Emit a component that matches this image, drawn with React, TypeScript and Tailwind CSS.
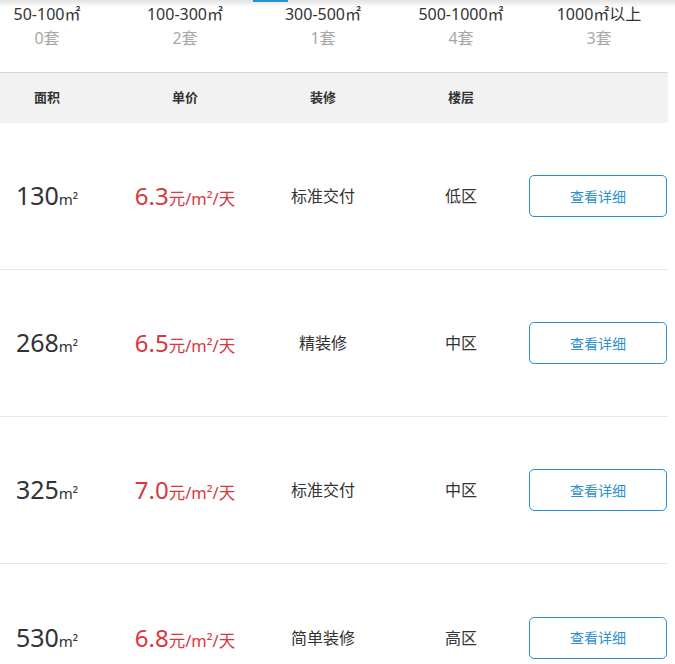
import React from "react";

const tabs = [
  { label: "50-100㎡", count: "0套" },
  { label: "100-300㎡", count: "2套" },
  { label: "300-500㎡", count: "1套" },
  { label: "500-1000㎡", count: "4套" },
  { label: "1000㎡以上", count: "3套" },
];

const rows = [
  { area: "130", price: "6.3", deco: "标准交付", floor: "低区" },
  { area: "268", price: "6.5", deco: "精装修", floor: "中区" },
  { area: "325", price: "7.0", deco: "标准交付", floor: "中区" },
  { area: "530", price: "6.8", deco: "简单装修", floor: "高区" },
];

const grid = "grid grid-cols-[116px_138px_138px_138px_138px] w-[668px]";

export default function App() {
  return (
    <div
      className="relative w-[675px] h-[664px] overflow-hidden bg-white"
      style={{ fontFamily: '"Noto Sans", "Noto Sans CJK SC", sans-serif' }}
    >
      <div className="absolute left-0 top-0 w-full h-[7px] bg-gradient-to-b from-[#e2e2e2] to-white" />
      <div className="absolute left-[253px] top-0 w-[35px] h-[2px] bg-[#2b8fcf]" />
      <div className={`${grid} relative h-[72px] pt-[2px]`}>
        {tabs.map((t, i) => (
          <div
            key={t.label}
            className={`flex flex-col items-center text-[16px] leading-[24px] ${i === 0 ? "pr-[22px]" : ""}`}
          >
            <span className="text-[#333]">{t.label}</span>
            <span className="text-[#a8a8a8]">{t.count}</span>
          </div>
        ))}
      </div>
      <div className={`${grid} h-[51px] bg-[#f2f2f2] border-t border-[#d8d8d8] items-center text-[13px] font-bold text-[#333]`}>
        <div className="text-center pr-[22px]">面积</div>
        <div className="text-center">单价</div>
        <div className="text-center">装修</div>
        <div className="text-center">楼层</div>
        <div />
      </div>
      {rows.map((r, i) => (
        <div
          key={i}
          className={`${grid} h-[147px] items-center ${i < rows.length - 1 ? "border-b border-[#e6e6e6]" : ""}`}
        >
          <div className="text-center pr-[22px] text-[#333]">
            <span className="text-[25px]">{r.area}</span>
            <span className="text-[15px]">m²</span>
          </div>
          <div className="text-center text-[#d9363e]">
            <span className="text-[24px]">{r.price}</span>
            <span className="text-[16.5px]">元/m²/天</span>
          </div>
          <div className="text-center text-[16px] text-[#333]">{r.deco}</div>
          <div className="text-center text-[16px] text-[#333]">{r.floor}</div>
          <div className="flex -ml-px">
            <button className="w-[138px] h-[42px] rounded-[5px] border border-[#2b8fcf] text-[14px] text-[#2b8fcf] bg-white">
              查看详细
            </button>
          </div>
        </div>
      ))}
    </div>
  );
}
